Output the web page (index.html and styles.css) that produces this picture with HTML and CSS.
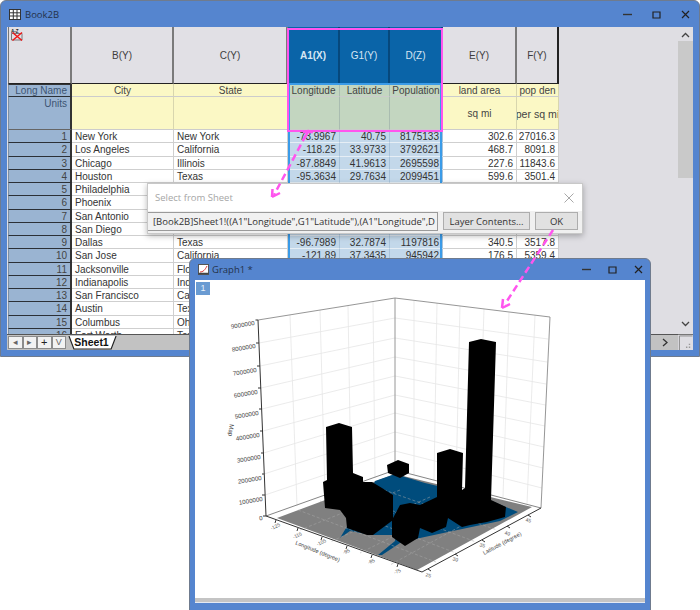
FILE: index.html
```html
<!DOCTYPE html>
<html lang="en">
<head>
<meta charset="utf-8">
<title>Select from Sheet</title>
<link rel="stylesheet" href="styles.css">
</head>
<body>
<div class="desktop">

<section class="window book">
  <header class="titlebar">
    <svg class="app-icon" viewBox="0 0 12 11"><rect width="12" height="11" fill="#fff"/><path d="M0 .5H12M0 3.8H12M0 7H12M0 10.5H12M.5 0V11M4.3 0V11M8 0V11M11.5 0V11" stroke="#333" fill="none"/></svg>
    <span class="wintitle">Book2B</span>
    <span class="controls book-controls">
      <svg viewBox="0 0 9 9"><path d="M0 4.5H9" stroke="#333" stroke-width="1.4"/></svg>
      <svg viewBox="0 0 9 9"><path d="M1 2H8V8H1Z" stroke="#222" stroke-width="1.2" fill="none"/></svg>
      <svg viewBox="0 0 9 9"><path d="M1 1L8 8M8 1L1 8" stroke="#222" stroke-width="1.2"/></svg>
    </span>
  </header>
  <div class="client">
    <div class="sheet">
      <div class="grid">
        <div class="h corner"><svg viewBox="0 0 13 14"><text x="0" y="4.6" class="az">A-Z</text><path d="M.5 5.5H11V12H.5Z" fill="none" stroke="#333" stroke-width=".6"/><path d="M1.5 4.5L11 12.5M11 4.5L1.5 12.5" stroke="#f01818" stroke-width="1.5"/></svg></div>
        <div class="h">B(Y)</div><div class="h">C(Y)</div><div class="h hs">A1(X)</div><div class="h hs">G1(Y)</div><div class="h hs">D(Z)</div><div class="h">E(Y)</div><div class="h hl">F(Y)</div>

        <div class="rh ln-h">Long Name</div><div class="ln">City</div><div class="ln">State</div><div class="ln s">Longitude</div><div class="ln s">Latitude</div><div class="ln s">Population</div><div class="ln">land area</div><div class="ln">pop den</div>

        <div class="rh un-h">Units</div><div class="un"></div><div class="un"></div><div class="un s"></div><div class="un s"></div><div class="un s"></div><div class="un">sq mi</div><div class="un tight">per sq mi</div>

        <div class="rh">1</div><div class="d">New York</div><div class="d">New York</div><div class="d n s">-73.9967</div><div class="d n s">40.75</div><div class="d n s">8175133</div><div class="d n">302.6</div><div class="d n">27016.3</div>
        <div class="rh">2</div><div class="d">Los Angeles</div><div class="d">California</div><div class="d n s">-118.25</div><div class="d n s">33.9733</div><div class="d n s">3792621</div><div class="d n">468.7</div><div class="d n">8091.8</div>
        <div class="rh">3</div><div class="d">Chicago</div><div class="d">Illinois</div><div class="d n s">-87.8849</div><div class="d n s">41.9613</div><div class="d n s">2695598</div><div class="d n">227.6</div><div class="d n">11843.6</div>
        <div class="rh">4</div><div class="d">Houston</div><div class="d">Texas</div><div class="d n s">-95.3634</div><div class="d n s">29.7634</div><div class="d n s">2099451</div><div class="d n">599.6</div><div class="d n">3501.4</div>
        <div class="rh">5</div><div class="d">Philadelphia</div><div class="d">Pennsylvania</div><div class="d n s">-75.1</div><div class="d n s">39.95</div><div class="d n s">1526006</div><div class="d n">134.1</div><div class="d n">11379.5</div>
        <div class="rh">6</div><div class="d">Phoenix</div><div class="d">Arizona</div><div class="d n s">-112.07</div><div class="d n s">33.45</div><div class="d n s">1445632</div><div class="d n">516.7</div><div class="d n">2797.8</div>
        <div class="rh">7</div><div class="d">San Antonio</div><div class="d">Texas</div><div class="d n s">-98.49</div><div class="d n s">29.42</div><div class="d n s">1327407</div><div class="d n">460.9</div><div class="d n">2880</div>
        <div class="rh">8</div><div class="d">San Diego</div><div class="d">California</div><div class="d n s">-117.15</div><div class="d n s">32.71</div><div class="d n s">1307402</div><div class="d n">325.2</div><div class="d n">4020</div>
        <div class="rh">9</div><div class="d">Dallas</div><div class="d">Texas</div><div class="d n s">-96.7989</div><div class="d n s">32.7874</div><div class="d n s">1197816</div><div class="d n">340.5</div><div class="d n">3517.8</div>
        <div class="rh">10</div><div class="d">San Jose</div><div class="d">California</div><div class="d n s">-121.89</div><div class="d n s">37.3435</div><div class="d n s">945942</div><div class="d n">176.5</div><div class="d n">5359.4</div>
        <div class="rh">11</div><div class="d">Jacksonville</div><div class="d">Florida</div><div class="d n s">-81.66</div><div class="d n s">30.33</div><div class="d n s">821784</div><div class="d n">747</div><div class="d n">1100</div>
        <div class="rh">12</div><div class="d">Indianapolis</div><div class="d">Indiana</div><div class="d n s">-86.16</div><div class="d n s">39.77</div><div class="d n s">820445</div><div class="d n">361.4</div><div class="d n">2270</div>
        <div class="rh">13</div><div class="d">San Francisco</div><div class="d">California</div><div class="d n s">-122.42</div><div class="d n s">37.77</div><div class="d n s">805235</div><div class="d n">46.9</div><div class="d n">17169</div>
        <div class="rh">14</div><div class="d">Austin</div><div class="d">Texas</div><div class="d n s">-97.74</div><div class="d n s">30.27</div><div class="d n s">790390</div><div class="d n">297.9</div><div class="d n">2653</div>
        <div class="rh">15</div><div class="d">Columbus</div><div class="d">Ohio</div><div class="d n s">-82.99</div><div class="d n s">39.96</div><div class="d n s">787033</div><div class="d n">217.2</div><div class="d n">3624</div>
        <div class="rh">16</div><div class="d">Fort Worth</div><div class="d">Texas</div><div class="d n s">-97.33</div><div class="d n s">32.75</div><div class="d n s">741206</div><div class="d n">339.8</div><div class="d n">2181</div>
      </div>
      <div class="sel-blue"></div>
      <div class="sel-pink"></div>
    </div>
    <div class="vscroll">
      <svg class="sb-arrow" viewBox="0 0 9 6"><path d="M1 5L4.5 1.5L8 5" fill="none" stroke="#444" stroke-width="1.3"/></svg>
      <div class="sb-thumb"></div>
      <div class="sb-track"></div>
      <svg class="sb-arrow" viewBox="0 0 9 6"><path d="M1 1L4.5 4.5L8 1" fill="none" stroke="#444" stroke-width="1.3"/></svg>
    </div>
    <div class="tabbar">
      <span class="nav">&#9666;</span><span class="nav">&#9656;</span><span class="nav dark">+</span><span class="nav">V</span>
      <span class="tab"><svg viewBox="0 0 52 14" preserveAspectRatio="none"><path d="M1 0L6 13H44L49 0" fill="#fff" stroke="#222" stroke-width="1.2"/></svg><b>Sheet1</b></span>
      <span class="tab-fill"></span>
      <svg class="hs-arrow" viewBox="0 0 6 9"><path d="M1 1L5 4.5L1 8" fill="none" stroke="#333" stroke-width="1.3"/></svg>
    </div>
    <div class="grip"><svg viewBox="0 0 15 16"><path d="M1 1H15M1 1V16" stroke="#888" fill="none"/><path d="M11 13h1.500M8 13h1.500M11 10h1.500" stroke="#999" stroke-width="1.500"/></svg></div>
  </div>
</section>

<section class="dialog">
  <div class="dlg-title"><span>Select from Sheet</span>
    <svg viewBox="0 0 10 10"><path d="M.5 .5L9.500 9.500M9.500 .5L.5 9.500" stroke="#a8a8a8" stroke-width="1"/></svg>
  </div>
  <div class="dlg-row">
    <div class="dlg-input">[Book2B]Sheet1!((A1"Longitude",G1"Latitude"),(A1"Longitude",D</div>
    <button class="btn layer">Layer Contents...</button>
    <button class="btn ok">OK</button>
  </div>
</section>

<section class="window graph">
  <header class="titlebar gtitle">
    <svg class="g-icon" viewBox="0 0 11 11"><rect x=".5" y=".5" width="10" height="10" fill="#fff" stroke="#555"/><path d="M2 8C5 8 7 6 9 2" stroke="#d33" fill="none"/><path d="M.5 9.500H10.500" stroke="#444" stroke-width="1.500"/></svg>
    <span class="wintitle">Graph1 *</span>
    <span class="controls graph-controls">
      <svg viewBox="0 0 9 9"><path d="M0 4.5H9" stroke="#333" stroke-width="1.4"/></svg>
      <svg viewBox="0 0 9 9"><path d="M1 2H8V8H1Z" stroke="#222" stroke-width="1.2" fill="none"/></svg>
      <svg viewBox="0 0 9 9"><path d="M1 1L8 8M8 1L1 8" stroke="#222" stroke-width="1.2"/></svg>
    </span>
  </header>
  <div class="gclient">
    <span class="layer-badge">1</span>
    <svg class="plot" viewBox="195 280 450 318">
      <!-- walls: grid -->
      <path class="gl" d="M259 343L395 318M260 366L395 338M261 388L395 357M262 409L395 376M263 431L395 395M263.500 453L395 413M264 474L395 432M265 495L395 451"/>
      <path class="gl" d="M290 315L297 506M320 310L325 495M348 306L351 486M373 302L375 478"/>
      <path class="gl" d="M395 318L548 339M395 338L547 362M395 357L546 384M395 376L545.500 405M395 395L545 426M395 413L544 447M395 432L543 468M395 451L542 488"/>
      <path class="gl" d="M414 301L414 475M437 303L434 480M460 306L456 486M484 309L478 491M509 312L503 497M535 315L527 504"/>
      <path class="edge" d="M258 320L395 298L550 317L541 508M395 298V470"/>
      <path class="edge thin" d="M266 516L395 470L541 508"/>
      <!-- floor -->
      <polygon class="floor" points="277,518 395,474 532,507 417,570"/>
      <polygon class="blue" points="375,481 395,474 425,483 480,496 518,512 500,521 448,532 420,538 400,543 382,555 378,555 395,541 396,535 372,535 350,531 340,538 346,528 365,510"/>
      <path class="fl" d="M298 510L436 562M320 501L456 553M345 493L476 542M370 485L497 530M400 490L300 530M430 497L330 542M460 503L360 553M490 510L390 565"/>
      <!-- bars -->
      <polygon class="bar" points="469,342 481,339 496,342 491,500 506,507 505,517 487,522 470,525 462,527 448,518 446,527 432,533 420,528 418,538 405,546 392,537 392,520 400,505 410,503 420,505 437,497 437,453 450,449 463,453 462,490 465,488"/>
      <polygon class="bar" points="326,427 339,423 352,427 353,473 363,477 363,482 372,482 382,488 393,495 393,520 373,535 367,535 347,528 346,518 340,510 325,508 323,482 327,480"/>
      <polygon class="bar" points="387,465 398,460 409,464 409,473 400,478 388,473"/>
      <!-- axes -->
      <path class="axis" d="M258 320L266 516M255.500 320H258M256 343H259M257 366H260M258 388H261M259 409H262M260 431H263M261 453H263.500M262 474H264M262 495H265M263 516H266"/>
      <path class="axis" d="M266 516L422 572L541 508M276 520L275 523M298 528L297 531M322 537L321 540M347 546L346 549M372 555L371 558M398 564L397 567M428 569L431 571M455 554L458 556M482 540L485 542M507 526L510 528M528 515L531 517"/>
      <!-- z labels -->
      <text class="tk" text-anchor="end" transform="translate(255 325) rotate(-9)">9000000</text>
      <text class="tk" text-anchor="end" transform="translate(256 348) rotate(-9)">8000000</text>
      <text class="tk" text-anchor="end" transform="translate(257 372) rotate(-9)">7000000</text>
      <text class="tk" text-anchor="end" transform="translate(258 394) rotate(-9)">6000000</text>
      <text class="tk" text-anchor="end" transform="translate(259 415) rotate(-9)">5000000</text>
      <text class="tk" text-anchor="end" transform="translate(260 437) rotate(-9)">4000000</text>
      <text class="tk" text-anchor="end" transform="translate(261 459) rotate(-9)">3000000</text>
      <text class="tk" text-anchor="end" transform="translate(262 480) rotate(-9)">2000000</text>
      <text class="tk" text-anchor="end" transform="translate(263 501) rotate(-9)">1000000</text>
      <text class="tk" text-anchor="end" transform="translate(263 520) rotate(-9)">0</text>
      <text class="tk" text-anchor="middle" transform="translate(229 430) rotate(98)">Map</text>
      <!-- x labels -->
      <text class="tk sm" text-anchor="middle" transform="translate(276 528) rotate(-25)">-125</text>
      <text class="tk sm" text-anchor="middle" transform="translate(298 537) rotate(-25)">-115</text>
      <text class="tk sm" text-anchor="middle" transform="translate(322 544) rotate(-25)">-105</text>
      <text class="tk sm" text-anchor="middle" transform="translate(347 553) rotate(-25)">-95</text>
      <text class="tk sm" text-anchor="middle" transform="translate(372 563) rotate(-25)">-85</text>
      <text class="tk sm" text-anchor="middle" transform="translate(398 573) rotate(-25)">-75</text>
      <text class="tk ti" text-anchor="middle" transform="translate(317 553) rotate(22)">Longitude (degree)</text>
      <!-- y labels -->
      <text class="tk sm" text-anchor="middle" transform="translate(428 577) rotate(14)">25</text>
      <text class="tk sm" text-anchor="middle" transform="translate(455 561) rotate(14)">30</text>
      <text class="tk sm" text-anchor="middle" transform="translate(482 547) rotate(14)">35</text>
      <text class="tk sm" text-anchor="middle" transform="translate(507 535) rotate(14)">40</text>
      <text class="tk sm" text-anchor="middle" transform="translate(528 522) rotate(14)">45</text>
      <text class="tk ti" text-anchor="middle" transform="translate(503 545) rotate(-28)">Latitude (degree)</text>
    </svg>
  </div>
  <div class="g-hscroll"></div>
</section>

<svg class="arrows" viewBox="0 0 700 610">
  <path class="arrow" d="M306 135L274 195"/>
  <path class="head" d="M303 132H313M309 130L304 139"/>
  <path class="head" d="M272 197L272.500 189M272 197L280 193"/>
  <path class="arrow" d="M553 230L505 304"/>
  <path class="head" d="M502 308L503 299M502 308L510 304"/>
</svg>

</div>
</body>
</html>
```

FILE: styles.css
```css
* { box-sizing: border-box; }
html, body { margin: 0; padding: 0; background: #fff; }
body { font-family: "Liberation Sans", Arial, sans-serif; font-size: 10px; color: #333; }

.desktop { position: relative; width: 700px; height: 610px; overflow: hidden; }

.window {
  position: absolute;
  display: flex;
  flex-direction: column;
  background: #5585cf;
  border: 1px solid #6f7b8e;
  border-radius: 6px 6px 0 0;
}

.book { left: 0; top: 0; width: 700px; height: 357px; padding: 0 6px 6px; }
.titlebar { display: flex; align-items: center; height: 26px; flex: none; gap: 4px; padding-left: 2px; }
.wintitle { font-family: "Open Sans", sans-serif; font-size: 9.5px; color: #24324a; }
.app-icon { width: 12px; height: 11px; flex: none; }
.controls { margin-left: auto; display: flex; }
.controls svg { width: 9px; height: 9px; }
.book-controls { gap: 20px; padding-right: 3px; }

.client {
  flex: 1;
  display: grid;
  grid-template-columns: 1fr 15px;
  grid-template-rows: 307px 16px;
  background: #dfdee3;
}

.sheet { position: relative; overflow: hidden; padding-left: 1px; }
.grid {
  display: grid;
  grid-template-columns: 64px 102px 114px 52px 50px 53px 74px 42px;
  grid-template-rows: 57px 13px 33px repeat(16, 13.25px);
  width: 551px;
}
.grid > div { overflow: hidden; white-space: nowrap; line-height: 12px; }

.h {
  display: flex;
  align-items: center;
  justify-content: center;
  background: #e1e0e5;
  border-right: 2px solid #7a7a7a;
  border-bottom: 1px solid #222;
  padding-top: 1px;
  color: #3d3d3d;
  font-size: 10px;
}
.hl { border-right-color: #222; }
.corner { justify-content: flex-start; align-items: flex-start; padding: 1px 0 0 2px; border-left: 1px solid #777; }
.corner svg { width: 13px; height: 14px; }
.az { font-size: 4.6px; font-weight: bold; fill: #222; }
.hs { background: #0a64a8; color: #d7e6f3; font-weight: bold; border-right-color: #06487c; }
.hs + .hs { font-weight: normal; }

.ln, .un {
  background: #fbf8c5;
  border-right: 1px solid #d8d6ae;
  text-align: center;
  color: #444;
}
.ln { border-bottom: 1px solid #ccc; padding-top: 1px; }
.un { display: flex; align-items: center; justify-content: center; border-bottom: 1px solid #ccc; padding-top: 2px; }
.un.tight { font-size: 10.6px; }
.grid > .s { background: #c3d6c0; border-right-color: #a9bcb0; }

.rh {
  background: #9ab4d2;
  color: #444;
  text-align: right;
  padding: 1px 3px 0 0;
  border-bottom: 1px solid #2c3036;
  border-right: 2px solid #333;
  border-left: 1px solid #7d8ea3;
}
.rh.ln-h { color: #3d5572; border-top: 1px solid #333; padding-top: 0; }
.rh.un-h { color: #3d5572; border-bottom-color: #666; padding-top: 1px; }

.d {
  background: #fff;
  padding: 1px 0 0 3px;
  border-right: 1px solid #cfcfcf;
  border-bottom: 1px solid #cfcfcf;
  color: #333;
}
.n { text-align: right; padding: 1px 3px 0 0; }
.grid > .d.s { background: #c3d8ea; border-right-color: #a7c2da; border-bottom-color: #e6eef5; }

.sel-blue {
  position: absolute;
  left: 281px;
  top: 56px;
  width: 154px;
  height: 260px;
  border: 2px solid #3a9be8;
  border-bottom: 0;
}
.sel-pink {
  position: absolute;
  left: 280px;
  top: 1px;
  width: 156px;
  height: 104px;
  border: 2px solid #ff55ee;
}

.vscroll { display: flex; flex-direction: column; background: #dfdee3; }
.sb-arrow { height: 6px; width: 9px; flex: none; margin: 5px auto 3px; }
.sb-thumb { height: 137px; background: #c9c9c9; flex: none; }
.sb-track { flex: 1; }
.sb-arrow:last-child { margin-bottom: 7px; }

.tabbar {
  display: flex;
  align-items: center;
  background: #c2c2c2;
  border-top: 1px solid #555;
  padding: 1px 0 1px 1px;
}
.nav {
  width: 14.5px;
  height: 13px;
  flex: none;
  background: #f2f2f2;
  border: 1px solid #8c8c8c;
  text-align: center;
  line-height: 11px;
  font-size: 9px;
  color: #666;
}
.nav.dark { color: #222; font-size: 11px; }
.tab { position: relative; width: 51px; height: 14px; margin-left: 2px; flex: none; text-align: center; color: #111; line-height: 13px; }
.tab svg { position: absolute; inset: 0; width: 100%; height: 100%; }
.tab b { position: relative; font-size: 10.5px; margin-right: 4px; }
.tab-fill { flex: 1; }
.hs-arrow { width: 6px; height: 9px; margin-right: 10px; }
.grip { border-top: 1px solid #777; background: #dfdee3; }
.grip svg { display: block; width: 15px; height: 15px; }

.dialog {
  position: absolute;
  left: 147px;
  top: 183px;
  width: 436px;
  height: 51px;
  background: #fff;
  border: 1px solid #c8c8c8;
  box-shadow: 0 2px 6px rgba(0,0,0,.28);
  display: flex;
  flex-direction: column;
}
.dlg-title {
  flex: none;
  height: 27px;
  display: flex;
  align-items: center;
  justify-content: space-between;
  padding: 0 8px 0 7px;
  font-family: "Open Sans", sans-serif;
  font-size: 9.5px;
  color: #a6a6a6;
}
.dlg-title svg { width: 10px; height: 10px; }
.dlg-row {
  flex: 1;
  display: flex;
  align-items: flex-start;
  gap: 5px;
  background: #f0f0f0;
  padding: 1px 4px 0 0;
}
.dlg-input {
  width: 290px;
  height: 19px;
  overflow: hidden;
  white-space: nowrap;
  background: #f1f1f1;
  border: 1px solid #9a9a9a;
  border-left: 0;
  padding: 0 0 0 5px;
  line-height: 18px;
  font-family: "Open Sans", sans-serif;
  font-size: 9.5px;
  color: #333;
}
.btn {
  height: 18px;
  padding: 0;
  margin: 0;
  background: #e1e1e1;
  border: 1px solid #adadad;
  font-family: "Open Sans", sans-serif;
  font-size: 9.5px;
  color: #333;
}
.layer { width: 87px; }
.ok { width: 43px; }

.graph { left: 189px; top: 258px; width: 462px; height: 360px; padding: 0 5px; }
.gtitle { height: 21px; padding-left: 2px; gap: 3px; }
.g-icon { width: 11px; height: 11px; flex: none; margin-left: 1px; }
.graph-controls { gap: 17px; padding-right: 2px; }
.gclient { position: relative; height: 318px; flex: none; background: #fff; }
.layer-badge {
  position: absolute;
  left: 1px;
  top: 2px;
  width: 14px;
  height: 13px;
  background: #6a9bd2;
  color: #e8f0fa;
  text-align: center;
  font-size: 9px;
  line-height: 13px;
}
.plot { display: block; width: 450px; height: 318px; }
.g-hscroll { height: 5px; flex: none; background: #c4c4c4; border-bottom: 1px solid #e4e9f2; }

.gl { fill: none; stroke: #e6e6e6; stroke-width: .8; }
.edge { fill: none; stroke: #8a8a8a; stroke-width: .9; }
.edge.thin { stroke: #777; }
.floor { fill: #808080; }
.blue { fill: #004c7c; }
.fl { fill: none; stroke: #a9a9a9; stroke-width: .5; stroke-dasharray: 3 2; }
.bar { fill: #000; }
.axis { fill: none; stroke: #333; stroke-width: 1; }
.tk { font-family: "Liberation Sans", Arial, sans-serif; font-size: 6.2px; fill: #444; }
.tk.sm { font-size: 5px; fill: #555; }
.tk.ti { font-size: 5.6px; fill: #444; }

.arrows { position: absolute; inset: 0; width: 700px; height: 610px; pointer-events: none; }
.arrow { fill: none; stroke: #ff55ee; stroke-width: 2.500; stroke-dasharray: 7 4; }
.head { fill: none; stroke: #ff55ee; stroke-width: 2.500; }
```
